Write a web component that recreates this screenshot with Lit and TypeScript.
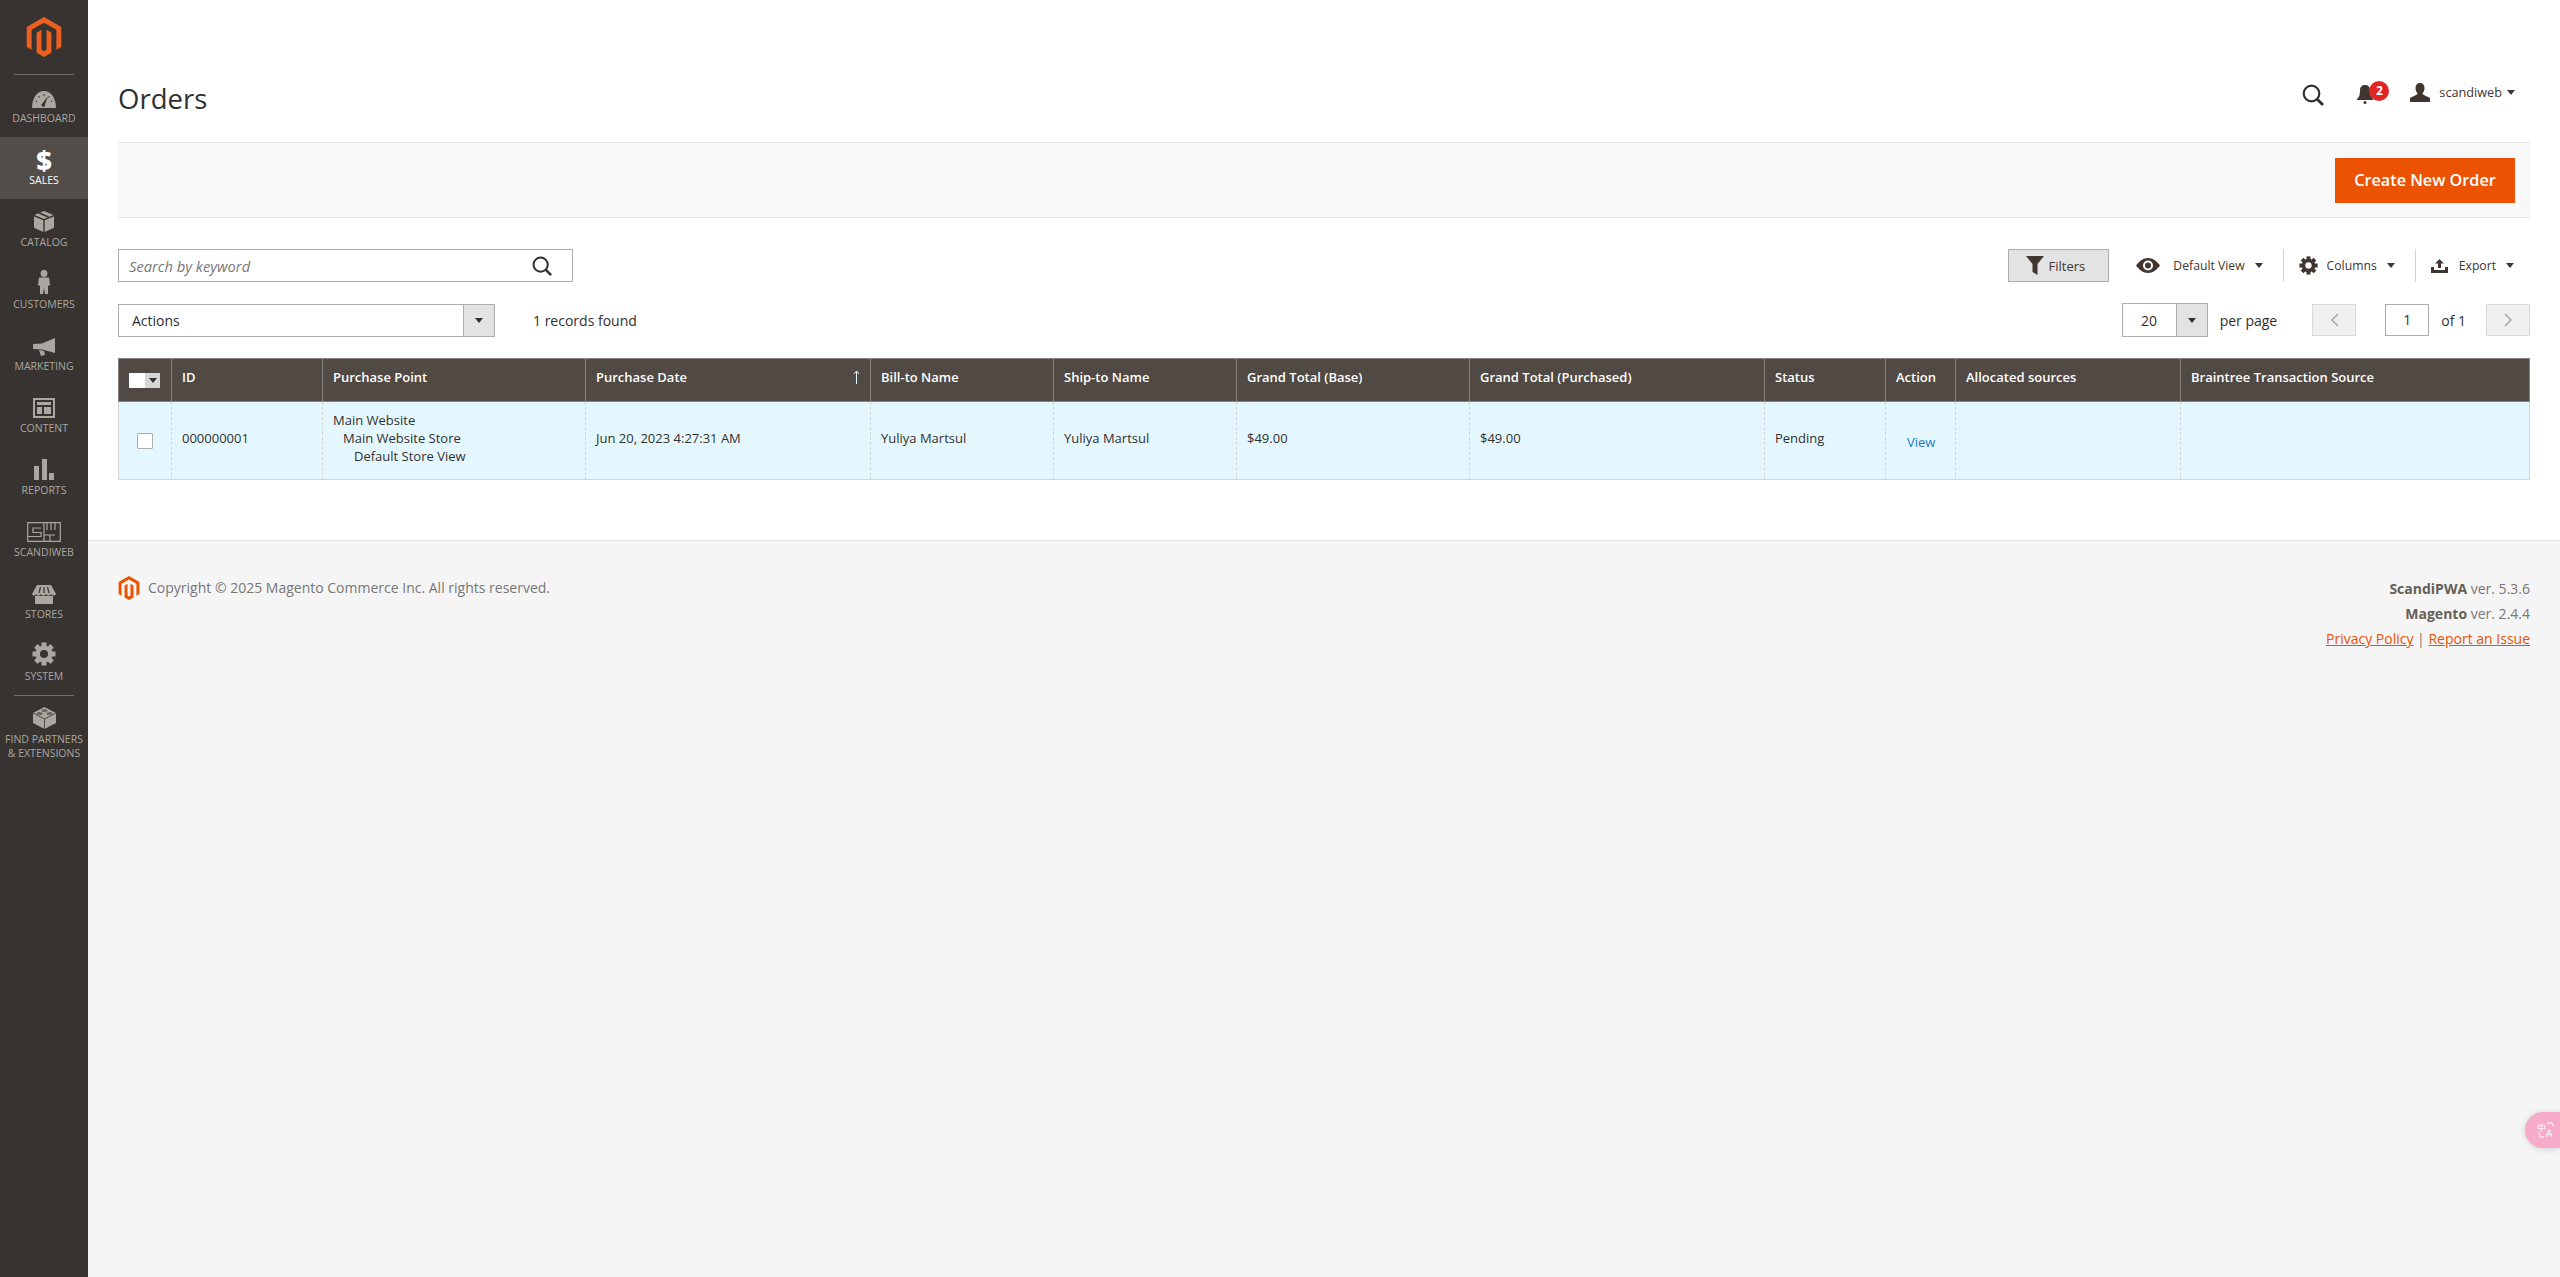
import { LitElement, html, css, svg } from "lit";
import { customElement } from "lit/decorators.js";

const LOGO = "M12 24l-4.455-2.572v-12l2.97-1.715v12.001l1.485.902 1.485-.902V7.713l2.971 1.715v12L12 24zM22.391 6v12l-2.97 1.714V7.713L12 3.43 4.574 7.713v12.001L1.609 18V6L12 0l10.391 6z";

const gear = (size: number, c: string, hole: string) => html`<svg width=${size} height=${size} viewBox="0 0 24 24">
  ${[0, 45, 90, 135, 180, 225, 270, 315].map((a) => svg`<rect x="9.5" y="0.5" width="5" height="6" fill=${c} transform="rotate(${a} 12 12)"/>`)}
  <circle cx="12" cy="12" r="8.6" fill=${c}/><circle cx="12" cy="12" r="4" fill=${hole}/></svg>`;

const NC = "#aaa6a0";
const BG = "#373330";
const icons: Record<string, unknown> = {
  dashboard: html`<svg width="24" height="17" viewBox="0 0 24 17"><path d="M0 17C0 7 5 0 12 0s12 7 12 17z" fill=${NC}/><path d="M12 3v2M6.5 5l1 1.7M17.5 5l-1 1.7M3.5 10l1.7.8M20.5 10l-1.7.8" stroke=${BG} stroke-width="1"/><path d="M16 5l-3 8.5a1.8 1.8 0 1 1-2.6-1z" fill=${BG}/></svg>`,
  catalog: html`<svg width="20" height="21" viewBox="0 0 20 21"><path d="M10 0l9.5 4-9.5 4L.5 4z" fill=${NC}/><path d="M0 5.5l9.3 3.8V21L0 16.8zM20 5.5l-9.300 3.800V21l9.300-4.200z" fill=${NC}/><path d="M5 2l9.500 4" stroke=${BG} stroke-width="1.600"/></svg>`,
  customers: html`<svg width="12" height="24" viewBox="0 0 12 24"><circle cx="6" cy="3.500" r="3.400" fill=${NC}/><path d="M1 7.500h10l1 7.500-2 1v8H7l-1-6-1 6H2v-8l-2-1z" fill=${NC}/></svg>`,
  marketing: html`<svg width="22" height="18" viewBox="0 0 22 18"><path d="M22 0v15L9 11.500 0 11V6l9-.5z" fill=${NC}/><path d="M6 12l5 1 1 4-4 1z" fill=${NC}/></svg>`,
  content: html`<svg width="22" height="20" viewBox="0 0 22 20"><path d="M0 0h22v20H0zM2 2v16h18V2z" fill=${NC} fill-rule="evenodd"/><path d="M4 4h14v3H4zM4 9h5v7H4zM11 9h7v7h-7z" fill=${NC}/></svg>`,
  reports: html`<svg width="20" height="21" viewBox="0 0 20 21"><path d="M0 7h5v14H0zM8 0h5v21H8zM15 14h5v7h-5z" fill=${NC}/></svg>`,
  scandiweb: html`<svg width="34" height="20" viewBox="0 0 34 20" fill="none" stroke=${NC} stroke-width="1.200"><path d="M.7.700h32.600v18.600H.7zM17 1v18M14 6H6v4.500h8v4H1M17 13h11M20 1v7M24 1v7M28 1v7M23 13v6"/></svg>`,
  stores: html`<svg width="24" height="19" viewBox="0 0 24 19"><path d="M3 19V11h18v8z" fill=${NC}/><path d="M5 0h14l5 9c-1 2-4 2-5 0-1 2-4 2-5 0-1 2-4 2-5 0-1 2-4 2-5 0-1 2-3 2-4 0z" fill=${NC}/><path d="M8.500 2L7 8M12 2v6M15.500 2L17 8" stroke=${BG} stroke-width="1.200"/></svg>`,
  system: gear(24, NC, BG),
  partners: html`<svg width="23" height="22" viewBox="0 0 23 22"><path d="M11.500 0L23 6v10l-11.500 6L0 16V6z" fill=${NC}/><path d="M0 6l11.500 6L23 6M11.500 12v10" fill="none" stroke=${BG} stroke-width=".8"/><ellipse cx="11.500" cy="3.500" rx="3" ry="1.500" fill=${BG} opacity=".55"/><ellipse cx="6.500" cy="6.500" rx="3" ry="1.500" fill=${BG} opacity=".55"/><ellipse cx="16.500" cy="6.500" rx="3" ry="1.500" fill=${BG} opacity=".55"/></svg>`,
};

const nav = [
  { k: "dashboard", l: ["DASHBOARD"] },
  { k: "sales", l: ["SALES"], active: true },
  { k: "catalog", l: ["CATALOG"] },
  { k: "customers", l: ["CUSTOMERS"] },
  { k: "marketing", l: ["MARKETING"] },
  { k: "content", l: ["CONTENT"] },
  { k: "reports", l: ["REPORTS"] },
  { k: "scandiweb", l: ["SCANDIWEB"] },
  { k: "stores", l: ["STORES"] },
  { k: "system", l: ["SYSTEM"] },
];

const cols = [
  ["", 53], ["ID", 151], ["Purchase Point", 263], ["Purchase Date", 285], ["Bill-to Name", 183], ["Ship-to Name", 183],
  ["Grand Total (Base)", 233], ["Grand Total (Purchased)", 295], ["Status", 121], ["Action", 70], ["Allocated sources", 225], ["Braintree Transaction Source", 350],
] as [string, number][];

const searchIcon = (s: number, c: string) => html`<svg width=${s} height=${s} viewBox="0 0 22 22" fill="none" stroke=${c} stroke-width="2.200"><circle cx="9.500" cy="9.500" r="7.800"/><path d="M15 15l6 6" stroke-width="2.800"/></svg>`;

@customElement("app-root")
export class AppRoot extends LitElement {
  static styles = css`
    :host { display: flex; min-height: 1277px; font-family: "Open Sans", "Liberation Sans", sans-serif; color: #303030; font-size: 14px; position: relative; overflow: hidden; }
    * { box-sizing: border-box; }
    .side { width: 88px; flex: none; background: #373330; display: flex; flex-direction: column; }
    .logo { height: 75px; margin: 0 14px; border-bottom: 1px solid #736e6a; display: flex; justify-content: center; padding-top: 17px; }
    .logo svg { fill: #eb5f21; }
    .item { height: 62px; display: flex; flex-direction: column; align-items: center; color: #aaa6a0; }
    .item.active { background: #524d49; color: #fff; }
    .ic { height: 33px; margin-bottom: 3px; display: flex; align-items: flex-end; justify-content: center; }
    .dollar { font-size: 27px; font-weight: 800; color: #fff; line-height: 24px; height: 22px; }
    .lab { font-size: 10.500px; line-height: 14px; text-align: center; white-space: nowrap; }
    .rule { height: 1px; margin: 0 14px; background: #736e6a; flex: none; }
    .item.partners { height: 90px; }
    .main { flex: 1; min-width: 0; display: flex; flex-direction: column; background: #f5f5f5; }
    .top { background: #fff; height: 541px; padding: 0 30px; border-bottom: 1px solid #e3e3e3; flex: none; }
    .head { height: 142px; display: flex; align-items: flex-start; padding-top: 77px; }
    h1 { margin: 1.500px 0 0; font-size: 27.500px; font-weight: 400; line-height: 40px; color: #303030; }
    .user { margin-left: auto; display: flex; align-items: center; height: 30px; padding-right: 15px; }
    .sr { margin-right: 33px; display: flex; margin-top: 5px; }
    .bell { position: relative; width: 31px; margin-right: 22px; display: flex; margin-top: 3px; }
    .badge { position: absolute; left: 12px; top: -3px; width: 20px; height: 20px; border-radius: 50%; background: #e22626; color: #fff; font-size: 12px; font-weight: 700; text-align: center; line-height: 20px; }
    .uname { font-size: 12.700px; color: #41362f; margin: 0 5px 0 9px; }
    .caret { width: 0; height: 0; border-left: 4px solid transparent; border-right: 4px solid transparent; border-top: 5px solid #41362f; flex: none; }
    .bar { height: 76px; background: #f8f8f8; border-top: 1px solid #e3e3e3; border-bottom: 1px solid #e3e3e3; display: flex; justify-content: flex-end; align-items: center; padding-right: 15px; }
    .cta { width: 180px; height: 45px; background: #eb5202; color: #fff; font-size: 16.200px; font-weight: 600; display: flex; align-items: center; justify-content: center; }
    .row1 { display: flex; align-items: center; margin-top: 31px; height: 33px; }
    .search { width: 455px; height: 33px; border: 1px solid #adadad; display: flex; align-items: center; justify-content: space-between; padding: 0 20px 0 10px; font-style: italic; font-size: 14.700px; color: #8a8a8a; }
    .search span { color: #787878; }
    .right { margin-left: auto; display: flex; align-items: center; color: #41362f; font-size: 12.200px; padding-right: 16px; }
    .filters { width: 101px; height: 33px; background: #e3e3e3; border: 1px solid #adadad; display: flex; align-items: center; justify-content: center; gap: 4px; margin-right: 27px; font-size: 13px; padding-right: 6px; }
    .tool { display: flex; align-items: center; height: 33px; }
    .tool .caret { margin-left: 10px; }
    .sep { width: 1px; height: 33px; background: #d1d1d1; margin: 0 15px 0 20px; }
    .t { margin-left: 13px; }
    .t.cols { margin-left: 9px; }
    .t.exp { margin-left: 11px; }
    .row2 { display: flex; align-items: center; margin-top: 21px; height: 34px; }
    .actions { width: 377px; height: 33px; border: 1px solid #adadad; display: flex; align-items: center; }
    .actions .txt { flex: 1; padding-left: 13px; font-size: 14px; color: #303030; }
    .arrow { width: 31px; height: 100%; background: #e3e3e3; border-left: 1px solid #adadad; display: flex; align-items: center; justify-content: center; }
    .arrow .caret { border-top-color: #303030; }
    .found { margin-left: 38px; font-size: 14px; }
    .pager { margin-left: auto; display: flex; align-items: center; font-size: 14px; color: #303030; }
    .pp { width: 86px; height: 34px; border: 1px solid #adadad; display: flex; align-items: center; }
    .pp .v { flex: 1; text-align: center; }
    .pplab { margin: 0 35px 0 12px; }
    .nb { width: 44px; height: 32px; background: #f0f0f0; border: 1px solid #d9d9d9; display: flex; align-items: center; justify-content: center; }
    .pin { width: 44px; height: 32px; border: 1px solid #adadad; text-align: center; line-height: 30px; margin: 0 12px 0 29px; }
    .of { margin-right: 20px; }
    table { margin-top: 21px; border-collapse: separate; border-spacing: 0; table-layout: fixed; width: 2412px; font-size: 13px; }
    th { background: #514943; color: #fff; font-weight: 600; text-align: left; height: 44px; padding: 0 10px 6px; border-left: 1px solid #8a837f; border-top: 1px solid #8a837f; border-bottom: 1px solid #8a837f; font-size: 13px; white-space: nowrap; position: relative; }
    th:last-child { border-right: 1px solid #8a837f; }
    td { background: #e5f7fe; height: 78px; padding: 0 10px 3px; border-left: 1px dashed #d6d6d6; border-bottom: 1px solid #d6d6d6; line-height: 17.700px; white-space: nowrap; }
    td:first-child { border-left: 1px solid #d6d6d6; }
    td:last-child { border-right: 1px solid #d6d6d6; }
    .up { position: absolute; right: 10px; top: 11px; }
    .hc { display: flex; width: 31px; height: 15px; position: relative; top: 3px; }
    .hc i { width: 16px; background: #fff; }
    .hc b { width: 15px; background: #d6d6d6; display: flex; align-items: center; justify-content: center; }
    .hc .caret { border-top-color: #303030; }
    .cb { display: block; width: 16px; height: 16px; background: #fff; border: 1px solid #adadad; border-radius: 1px; margin: 3px 0 0 8px; }
    .i1 { padding-left: 10px; } .i2 { padding-left: 21px; }
    .view { color: #1979c3; padding-left: 11px; display: inline-block; padding-top: 7px; }
    .foot { display: flex; justify-content: space-between; padding: 35px 30px 0; font-size: 14px; color: #777; }
    .fl { display: flex; align-items: flex-start; gap: 7px; }
    .fl svg { fill: #eb5202; margin-left: -1px; }
    .fl span { line-height: 24px; }
    .fr { text-align: right; line-height: 25px; font-size: 14px; }
    .fr a { color: #eb5202; text-decoration: underline; }
    .fr b { font-weight: 700; color: #676056; }
    .pill { position: absolute; right: 0; top: 1112px; width: 35px; height: 36px; border-radius: 18px 0 0 18px; background: #f5abc9; box-shadow: 0 1px 6px rgba(0,0,0,.15); display: flex; align-items: center; padding-left: 12px; }
  `;

  render() {
    return html`
      <aside class="side">
        <div class="logo"><svg width="40" height="40" viewBox="0 0 24 24"><path d=${LOGO}/></svg></div>
        ${nav.map((n) => html`<div class="item ${n.active ? "active" : ""}">
          <div class="ic">${n.k === "sales" ? html`<span class="dollar">$</span>` : icons[n.k]}</div>
          <div class="lab">${n.l[0]}</div></div>`)}
        <div class="rule"></div>
        <div class="item partners"><div class="ic">${icons.partners}</div><div class="lab">FIND PARTNERS<br />&amp; EXTENSIONS</div></div>
      </aside>
      <div class="main">
        <div class="top">
          <div class="head">
            <h1>Orders</h1>
            <div class="user">
              <span class="sr">${searchIcon(22, "#303030")}</span>
              <span class="bell">
                <svg width="16" height="20" viewBox="0 0 16 20"><path d="M8 1c3 0 5 2 5 5 0 5 1 7 3 9v1H0v-1c2-2 3-4 3-9 0-3 2-5 5-5z" fill="#41362f"/><circle cx="8" cy="18.500" r="1.500" fill="#41362f"/></svg>
                <span class="badge">2</span>
              </span>
              <svg width="20" height="19" viewBox="0 0 20 19"><path d="M10 0c3 0 4.500 2 4.500 5 0 2.500-1 4-2 5.500 0 1.500 4 2.500 7.500 4.500v4H0v-4c3.500-2 7.500-3 7.500-4.500-1-1.500-2-3-2-5.500C5.500 2 7 0 10 0z" fill="#41362f"/></svg>
              <span class="uname">scandiweb</span>
              <span class="caret"></span>
            </div>
          </div>
          <div class="bar"><div class="cta">Create New Order</div></div>
          <div class="row1">
            <div class="search"><span>Search by keyword</span>${searchIcon(20, "#303030")}</div>
            <div class="right">
              <div class="filters">
                <svg width="18" height="19" viewBox="0 0 18 19"><path d="M0 0h18l-6.500 8v11l-5-3V8z" fill="#41362f"/></svg>
                Filters
              </div>
              <div class="tool">
                <svg width="24" height="15" viewBox="0 0 24 15"><path d="M12 0c5 0 9 3.500 12 7.500C21 11.500 17 15 12 15S3 11.500 0 7.500C3 3.500 7 0 12 0zm0 2.500a5 5 0 1 0 0 10 5 5 0 0 0 0-10z" fill="#41362f"/><circle cx="12" cy="7.500" r="3" fill="#41362f"/></svg>
                <span class="t">Default View</span><span class="caret"></span>
              </div>
              <div class="sep"></div>
              <div class="tool">
                ${gear(19, "#41362f", "#fff")}
                <span class="t cols">Columns</span><span class="caret"></span>
              </div>
              <div class="sep"></div>
              <div class="tool">
                <svg width="17" height="14" viewBox="0 0 17 14"><path d="M8.500 0L13 4.500h-3V9H7V4.500H4zM0 8h3v3h11V8h3v6H0z" fill="#41362f"/></svg>
                <span class="t exp">Export</span><span class="caret"></span>
              </div>
            </div>
          </div>
          <div class="row2">
            <div class="actions"><span class="txt">Actions</span><span class="arrow"><span class="caret"></span></span></div>
            <span class="found">1 records found</span>
            <div class="pager">
              <div class="pp"><span class="v">20</span><span class="arrow"><span class="caret"></span></span></div>
              <span class="pplab">per page</span>
              <span class="nb"><svg width="9" height="14" viewBox="0 0 9 14" fill="none" stroke="#a9a9a9" stroke-width="1.600"><path d="M8 1L2 7l6 6"/></svg></span>
              <span class="pin">1</span>
              <span class="of">of 1</span>
              <span class="nb"><svg width="9" height="14" viewBox="0 0 9 14" fill="none" stroke="#a9a9a9" stroke-width="1.600"><path d="M1 1l6 6-6 6"/></svg></span>
            </div>
          </div>
          <table>
            <colgroup>${cols.map((c) => html`<col style="width:${c[1]}px" />`)}</colgroup>
            <thead><tr>
              ${cols.map((c, i) => html`<th>
                ${i === 0 ? html`<span class="hc"><i></i><b><span class="caret"></span></b></span>` : c[0]}
                ${i === 3 ? html`<svg class="up" width="7" height="14" viewBox="0 0 7 14" fill="none" stroke="#e0f6fe" stroke-width="1"><path d="M3.500 14V1M1 4l2.500-3L6 4"/></svg>` : ""}
              </th>`)}
            </tr></thead>
            <tbody><tr>
              <td><span class="cb"></span></td>
              <td>000000001</td>
              <td><div>Main Website</div><div class="i1">Main Website Store</div><div class="i2">Default Store View</div></td>
              <td>Jun 20, 2023 4:27:31 AM</td>
              <td>Yuliya Martsul</td>
              <td>Yuliya Martsul</td>
              <td>$49.00</td>
              <td>$49.00</td>
              <td>Pending</td>
              <td><span class="view">View</span></td>
              <td></td>
              <td></td>
            </tr></tbody>
          </table>
        </div>
        <div class="foot">
          <div class="fl"><svg width="24" height="24" viewBox="0 0 24 24"><path d=${LOGO}/></svg><span>Copyright © 2025 Magento Commerce Inc. All rights reserved.</span></div>
          <div class="fr"><div><b>ScandiPWA</b> ver. 5.3.6</div><div><b>Magento</b> ver. 2.4.4</div><div><a>Privacy Policy</a> | <a>Report an Issue</a></div></div>
        </div>
      </div>
      <div class="pill"><svg width="20" height="26" viewBox="0 -5 20 26"><text x="0" y="9" font-size="9" fill="#fff" font-family="Noto Sans CJK SC, sans-serif">中</text><text x="9" y="15" font-size="10" fill="#fff" font-family="Open Sans, sans-serif">A</text><path d="M10 1h5l1.500 3M2 10l1 5h4" fill="none" stroke="#fff" stroke-width="1"/></svg></div>
    `;
  }
}
